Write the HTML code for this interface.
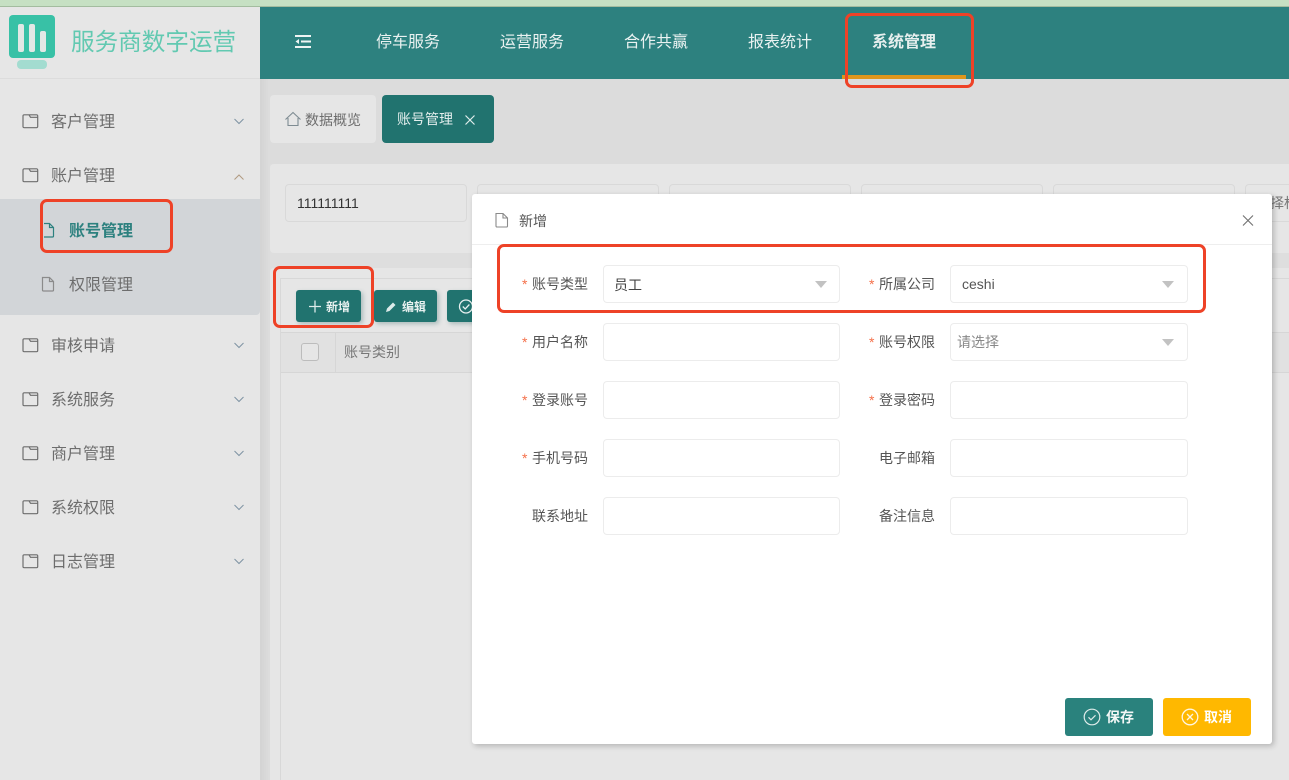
<!DOCTYPE html>
<html lang="zh"><head><meta charset="utf-8"><style>
*{box-sizing:border-box}
html,body{margin:0;padding:0;width:1289px;height:780px;overflow:hidden;background:#dedede;font-family:"Liberation Sans","Noto Sans CJK SC",sans-serif}
.a{position:absolute;white-space:nowrap}
.t{position:absolute;white-space:nowrap;line-height:20px}
.m{font-size:16px;color:#6d6d6d;left:51px}
.n{font-size:16px;color:#eaf2f1;top:33px}
.b{position:absolute;background:#fff;border:1px solid #ececec;border-radius:4px;width:237px;height:38px}
.q{position:absolute;border:1px solid #d9d9d9;border-radius:4px;width:182px;height:38px;top:184px}
.l{font-size:14px;color:#555;}
.s{color:#f5704a;font-size:14px}
.r{position:absolute;border:3px solid #ee4227;border-radius:7px}
.tri{position:absolute;width:0;height:0;border-left:6.500px solid transparent;border-right:6.500px solid transparent;border-top:7px solid #c2c2c2}
svg{position:absolute;left:0;top:0;overflow:visible}
.btn{position:absolute;background:#21736f;border-radius:3px;height:32px;top:290px;box-shadow:2px 2px 4px rgba(60,110,110,.35)}
</style></head><body>
<div class="a" style="left:0;top:0;width:1289px;height:7px;background:#c6e0c3;border-bottom:1px solid #a3bc9f"></div>

<!-- sidebar -->
<div class="a" style="left:0;top:7px;width:260px;height:773px;background:#e6e6e6"></div>
<div class="a" style="left:0;top:78px;width:260px;height:1px;background:#dcdcdc"></div>
<div class="a" style="left:9px;top:15px;width:46px;height:43px;background:#38c1a6;border-radius:4px"></div>
<div class="a" style="left:18px;top:24px;width:6px;height:28px;background:#e2e8e5;border-radius:2px"></div>
<div class="a" style="left:29px;top:24px;width:6px;height:28px;background:#e2e8e5;border-radius:2px"></div>
<div class="a" style="left:40px;top:31px;width:6px;height:21px;background:#e2e8e5;border-radius:2px"></div>
<div class="a" style="left:17px;top:60px;width:30px;height:9px;background:#a3dcd0;border-radius:4px"></div>
<div class="t" style="left:71px;top:25px;font-size:23.600px;line-height:36px;color:#62c9b1">服务商数字运营</div>

<div class="a" style="left:0;top:199px;width:260px;height:116px;background:#d2d5d8;border-radius:0 0 4px 0"></div>
<div class="t m" style="top:113px">客户管理</div>
<div class="t m" style="top:167px">账户管理</div>
<div class="t m" style="top:337px">审核申请</div>
<div class="t m" style="top:391px">系统服务</div>
<div class="t m" style="top:445px">商户管理</div>
<div class="t m" style="top:499px">系统权限</div>
<div class="t m" style="top:553px">日志管理</div>
<div class="t" style="left:69px;top:222px;font-size:16px;color:#2d817f;font-weight:700">账号管理</div>
<div class="t" style="left:69px;top:276px;font-size:16px;color:#6d6d6d">权限管理</div>

<svg width="1289" height="780" fill="none" stroke="#6e6e6e" stroke-width="1.200">
<path d="M23 126.500V116a1.200 1.200 0 0 1 1.200-1.200H36.500a1.200 1.200 0 0 1 1.200 1.200v10.500a1.200 1.200 0 0 1-1.200 1.200H24.200a1.200 1.200 0 0 1-1.200-1.200zM29 114.800l1.500 2.500H37.500"/>
<path d="M23 180.500V170a1.200 1.200 0 0 1 1.200-1.200H36.500a1.200 1.200 0 0 1 1.200 1.200v10.500a1.200 1.200 0 0 1-1.200 1.200H24.200a1.200 1.200 0 0 1-1.200-1.200zM29 168.800l1.500 2.500H37.500"/>
<path d="M23 350.500V340a1.200 1.200 0 0 1 1.200-1.200H36.500a1.200 1.200 0 0 1 1.200 1.200v10.500a1.200 1.200 0 0 1-1.200 1.200H24.200a1.200 1.200 0 0 1-1.200-1.200zM29 338.800l1.500 2.500H37.500"/>
<path d="M23 404.500V394a1.200 1.200 0 0 1 1.200-1.200H36.500a1.200 1.200 0 0 1 1.200 1.200v10.500a1.200 1.200 0 0 1-1.200 1.200H24.200a1.200 1.200 0 0 1-1.200-1.200zM29 392.800l1.500 2.500H37.500"/>
<path d="M23 458.500V448a1.200 1.200 0 0 1 1.200-1.200H36.500a1.200 1.200 0 0 1 1.200 1.200v10.500a1.200 1.200 0 0 1-1.200 1.200H24.200a1.200 1.200 0 0 1-1.200-1.200zM29 446.800l1.500 2.500H37.500"/>
<path d="M23 512.500V502a1.200 1.200 0 0 1 1.200-1.200H36.500a1.200 1.200 0 0 1 1.200 1.200v10.500a1.200 1.200 0 0 1-1.200 1.200H24.200a1.200 1.200 0 0 1-1.200-1.200zM29 500.800l1.500 2.500H37.500"/>
<path d="M23 566.500V556a1.200 1.200 0 0 1 1.200-1.200H36.500a1.200 1.200 0 0 1 1.200 1.200v10.500a1.200 1.200 0 0 1-1.200 1.200H24.200a1.200 1.200 0 0 1-1.200-1.200zM29 554.800l1.500 2.500H37.500"/>
<g stroke="#7e93a3" stroke-width="1">
<path d="M234.500 119l4.500 4.500 4.500-4.500"/>
<path d="M234.500 343l4.500 4.500 4.500-4.500"/>
<path d="M234.500 397l4.500 4.500 4.500-4.500"/>
<path d="M234.500 451l4.500 4.500 4.500-4.500"/>
<path d="M234.500 505l4.500 4.500 4.500-4.500"/>
<path d="M234.500 559l4.500 4.500 4.500-4.500"/>
</g>
<path d="M234.500 179.500l4.500-4.500 4.500 4.500" stroke="#b09a80" stroke-width="1"/>
<path d="M44 223.500h5.500l4 4v8.500a1 1 0 0 1-1 1H44M49.500 223.500v4h4" stroke="#2d817f" stroke-width="1.200"/>
<path d="M42.500 277.500h7l4 4v8.500a1 1 0 0 1-1 1H43.500a1 1 0 0 1-1-1zM49.500 277.500v4h4" stroke="#8b8b8b" stroke-width="1.200"/>
</svg>

<!-- header -->
<div class="a" style="left:260px;top:7px;width:1029px;height:72px;background:#2d817f"></div>
<div class="a" style="left:260px;top:79px;width:10px;height:701px;background:linear-gradient(90deg,#d3d3d3,#dddddd)"></div>
<svg width="1289" height="780" fill="none" stroke="#eef4f3" stroke-width="2"><path d="M295 36h16M301 41.500h10M295 47h16"/><path d="M299 39l-3.500 2.500 3.500 2.500z" fill="#eef4f3" stroke="none"/></svg>
<div class="t n" style="left:376px">停车服务</div>
<div class="t n" style="left:500px">运营服务</div>
<div class="t n" style="left:624px">合作共赢</div>
<div class="t n" style="left:748px">报表统计</div>
<div class="t n" style="left:872px;font-weight:700;color:#e6efee">系统管理</div>
<div class="a" style="left:842px;top:75px;width:124px;height:4px;background:#de961c"></div>

<!-- tabs -->
<div class="a" style="left:270px;top:79px;width:1019px;height:85px;background:#dcdcdc"></div>
<div class="a" style="left:270px;top:95px;width:106px;height:48px;background:#e6e6e6;border-radius:4px"></div>
<svg width="1289" height="780" fill="none" stroke="#7e8b92" stroke-width="1.100"><path d="M285.500 119.500l7.500-7 7.500 7M288 118v7.500h10V118"/></svg>
<div class="t" style="left:305px;top:110px;font-size:14px;color:#6d6d6d">数据概览</div>
<div class="a" style="left:382px;top:95px;width:112px;height:48px;background:#21736f;border-radius:4px"></div>
<div class="t" style="left:397px;top:109px;font-size:14px;color:#e3eeed">账号管理</div>
<svg width="1289" height="780" fill="none" stroke="#dfeceb" stroke-width="1.200"><path d="M465.500 115.500l9 9M474.500 115.500l-9 9"/></svg>

<!-- query -->
<div class="a" style="left:270px;top:164px;width:1019px;height:89px;background:#e6e6e6;border-radius:4px 0 0 4px"></div>
<div class="q" style="left:285px"></div><div class="q" style="left:477px"></div><div class="q" style="left:669px"></div><div class="q" style="left:861px"></div><div class="q" style="left:1053px"></div><div class="q" style="left:1245px"></div>
<div class="t" style="left:297px;top:193px;font-size:14px;color:#333">111111111</div>
<div class="t" style="left:1270px;top:193px;font-size:14px;color:#777">择标</div>

<!-- table -->
<div class="a" style="left:270px;top:268px;width:1019px;height:512px;background:#e6e6e6;border-radius:4px 0 0 0"></div>
<div class="a" style="left:280px;top:278px;width:1009px;height:502px;border:1px solid #d8d8d8;border-right:0;border-bottom:0"></div>
<div class="a" style="left:281px;top:332px;width:1008px;height:41px;background:#e1e1e1;border-top:1px solid #d6d6d6;border-bottom:1px solid #d6d6d6"></div>
<div class="a" style="left:335px;top:333px;width:1px;height:39px;background:#d6d6d6"></div>
<div class="a" style="left:301px;top:343px;width:18px;height:18px;border:1px solid #bcbcbc;border-radius:3px;background:#e6e6e6"></div>
<div class="t" style="left:344px;top:342px;font-size:14px;color:#777">账号类别</div>
<div class="btn" style="left:296px;width:65px"></div>
<svg width="1289" height="780" fill="none" stroke="#dcebea" stroke-width="1.300"><path d="M315 300.500v12M309 306.500h12"/></svg>
<div class="t" style="left:326px;top:297px;font-size:12px;color:#e8f1f0;font-weight:700">新增</div>
<div class="btn" style="left:374px;width:63px"></div>
<svg width="1289" height="780"><path d="M386 312l1-3.500 6-6 2.500 2.500-6 6z" fill="#dcebea"/></svg>
<div class="t" style="left:402px;top:297px;font-size:12px;color:#e8f1f0;font-weight:700">编辑</div>
<div class="btn" style="left:447px;width:60px"></div>
<svg width="1289" height="780" fill="none" stroke="#e8f1f0" stroke-width="1.300"><circle cx="466" cy="306.500" r="6.500"/><path d="M462.800 306.500l2.400 2.400 4.200-4.400"/></svg>

<!-- modal -->
<div class="a" style="left:472px;top:194px;width:800px;height:550px;background:#fff;border-radius:3px;box-shadow:2px 2px 6px rgba(0,0,0,.22)"></div>
<div class="a" style="left:472px;top:244px;width:800px;height:1px;background:#eeeeee"></div>
<svg width="1289" height="780" fill="none" stroke="#8a8a8a" stroke-width="1.100"><path d="M496 213.500h7l4.500 4.500v8a1 1 0 0 1-1 1H497a1 1 0 0 1-1-1zM503 213.500V218h4.500"/><path d="M1243 215.500l10 10M1253 215.500l-10 10" stroke="#707070"/></svg>
<div class="t" style="left:519px;top:211px;font-size:14px;color:#555">新增</div>

<div class="t s" style="left:522px;top:274px">*</div><div class="t l" style="left:532px;top:274px">账号类型</div>
<div class="t s" style="left:522px;top:332px">*</div><div class="t l" style="left:532px;top:332px">用户名称</div>
<div class="t s" style="left:522px;top:390px">*</div><div class="t l" style="left:532px;top:390px">登录账号</div>
<div class="t s" style="left:522px;top:448px">*</div><div class="t l" style="left:532px;top:448px">手机号码</div>
<div class="t l" style="left:532px;top:506px">联系地址</div>
<div class="t s" style="left:869px;top:274px">*</div><div class="t l" style="left:879px;top:274px">所属公司</div>
<div class="t s" style="left:869px;top:332px">*</div><div class="t l" style="left:879px;top:332px">账号权限</div>
<div class="t s" style="left:869px;top:390px">*</div><div class="t l" style="left:879px;top:390px">登录密码</div>
<div class="t l" style="left:879px;top:448px">电子邮箱</div>
<div class="t l" style="left:879px;top:506px">备注信息</div>

<div class="b" style="left:603px;top:265px"></div><div class="b" style="left:603px;top:323px"></div><div class="b" style="left:603px;top:381px"></div><div class="b" style="left:603px;top:439px"></div><div class="b" style="left:603px;top:497px"></div>
<div class="b" style="left:950px;top:265px;width:238px"></div><div class="b" style="left:950px;top:323px;width:238px"></div><div class="b" style="left:950px;top:381px;width:238px"></div><div class="b" style="left:950px;top:439px;width:238px"></div><div class="b" style="left:950px;top:497px;width:238px"></div>
<div class="t" style="left:614px;top:275px;font-size:14px;color:#444">员工</div>
<div class="t" style="left:962px;top:274px;font-size:14px;color:#555">ceshi</div>
<div class="t" style="left:957px;top:332px;font-size:14px;color:#888">请选择</div>
<div class="tri" style="left:815px;top:281px"></div><div class="tri" style="left:1162px;top:281px"></div><div class="tri" style="left:1162px;top:339px"></div>

<div class="a" style="left:1065px;top:698px;width:88px;height:38px;background:#2a827d;border-radius:3px"></div>
<svg width="1289" height="780" fill="none" stroke="#dfecea" stroke-width="1.200"><circle cx="1092" cy="717" r="7.800"/><path d="M1088.500 717.300l2.500 2.500 4.500-4.500"/></svg>
<div class="t" style="left:1106px;top:707px;font-size:14px;font-weight:700;color:#f2f7f6">保存</div>
<div class="a" style="left:1163px;top:698px;width:88px;height:38px;background:#ffb800;border-radius:3px"></div>
<svg width="1289" height="780" fill="none" stroke="#fff6e0" stroke-width="1.300"><circle cx="1190" cy="717" r="7.800"/><path d="M1187 714l6 6M1193 714l-6 6"/></svg>
<div class="t" style="left:1204px;top:707px;font-size:14px;font-weight:700;color:#fff">取消</div>

<!-- annotations -->
<div class="r" style="left:845px;top:13px;width:129px;height:75px"></div>
<div class="r" style="left:40px;top:199px;width:133px;height:54px"></div>
<div class="r" style="left:273px;top:266px;width:101px;height:62px"></div>
<div class="r" style="left:497px;top:244px;width:709px;height:69px"></div>
</body></html>
